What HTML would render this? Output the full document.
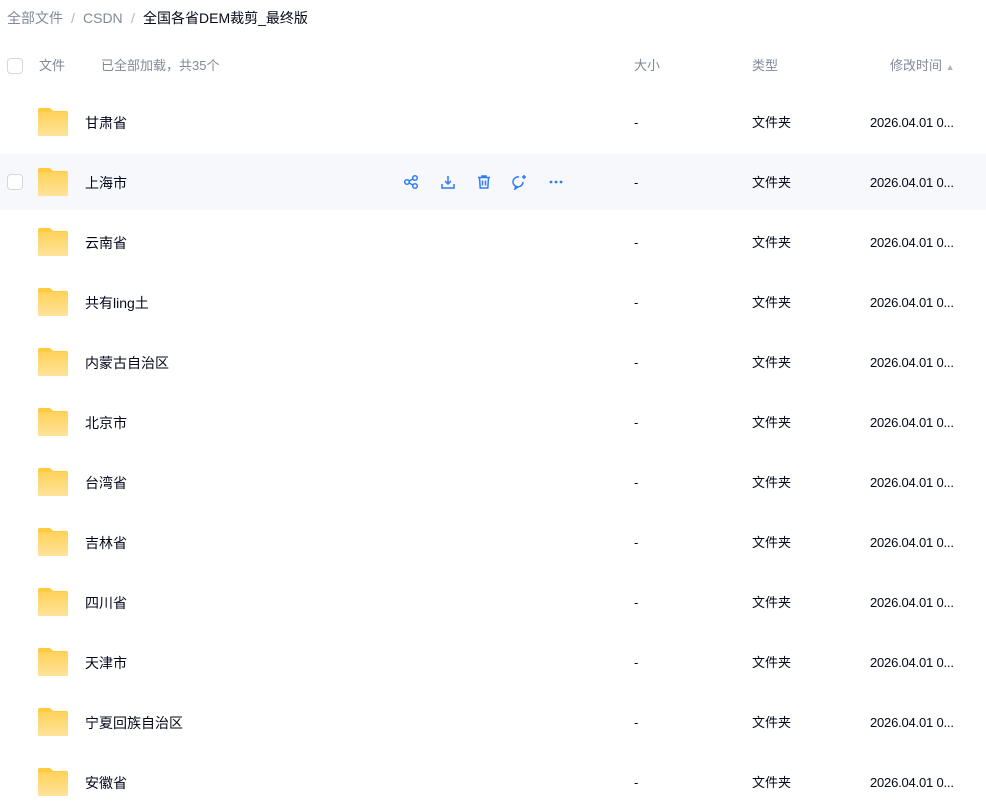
<!DOCTYPE html>
<html><head><meta charset="utf-8"><style>
*{margin:0;padding:0;box-sizing:border-box}
body{width:986px;height:801px;background:#fff;font-family:"Liberation Sans","Noto Sans CJK SC",sans-serif;position:relative;overflow:hidden;color:#03081a}
.a{position:absolute;white-space:nowrap}
.bc{top:8px;font-size:14px;line-height:20px;color:#818999}
.hd{top:56px;font-size:13px;line-height:20px;color:#818999}
.cb{position:absolute;left:7px;width:16px;height:16px;border:1px solid #d4d7de;border-radius:4px;background:#fff}
.row{position:absolute;left:0;width:986px;height:56px}
.row.h{background:#f7f8fc}
.fold{position:absolute;left:38px;width:30px;height:28px}
.c{position:absolute;top:1px;line-height:56px;white-space:nowrap}
.nm{left:85px;font-size:14px}
.sz{left:634px;font-size:13px}
.tp{left:752px;font-size:13px}
.tm{left:870px;font-size:13px;letter-spacing:-0.2px}
.ic{position:absolute;top:20px}
</style></head><body>
<div class="a bc" style="left:7px">全部文件</div>
<div class="a bc" style="left:71px;color:#b0b5c0">/</div>
<div class="a bc" style="left:83px">CSDN</div>
<div class="a bc" style="left:131px;color:#b0b5c0">/</div>
<div class="a bc" style="left:143px;color:#03081a">全国各省DEM裁剪_最终版</div>
<div class="cb" style="top:58px"></div>
<div class="a hd" style="left:39px">文件</div>
<div class="a hd" style="left:101px">已全部加载，共35个</div>
<div class="a hd" style="left:634px">大小</div>
<div class="a hd" style="left:752px">类型</div>
<div class="a hd" style="left:890px">修改时间 <span style="font-size:9px;color:#b0b5c0">▲</span></div>
<div id="rows"></div>
<script>
var n=["甘肃省","上海市","云南省","共有ling土","内蒙古自治区","北京市","台湾省","吉林省","四川省","天津市","宁夏回族自治区","安徽省"];
var h="";
var fold='<svg class="fold" style="top:14px" viewBox="0 0 30 28"><defs><linearGradient id="g" x1="0" y1="0" x2="0" y2="1"><stop offset="0" stop-color="#ffd25a"/><stop offset="1" stop-color="#ffe39c"/></linearGradient></defs><path d="M2 0h10l3 3h13a2 2 0 0 1 2 2v21a2 2 0 0 1-2 2H2a2 2 0 0 1-2-2V2a2 2 0 0 1 2-2z" fill="#ffc940"/><rect x="0" y="4" width="30" height="24" rx="2" fill="url(#g)"/></svg>';
for(var i=0;i<n.length;i++){
var t=94+i*60;
h+='<div class="row'+(i==1?' h':'')+'" style="top:'+t+'px">';
if(i==1){h+='<div class="cb" style="top:20px"></div>';
h+='<svg class="ic" style="left:403px" width="16" height="16" viewBox="0 0 16 16" fill="none" stroke="#2f7bf5" stroke-width="1.5"><circle cx="4" cy="8" r="2.3"/><circle cx="12" cy="4" r="2.3"/><circle cx="12" cy="12" r="2.3"/><path d="M6 7l4-2M6 9l4 2"/></svg>';
h+='<svg class="ic" style="left:440px" width="16" height="16" viewBox="0 0 16 16" fill="none" stroke="#2f7bf5" stroke-width="1.5"><path d="M8 2v8M5 7l3 3 3-3M2 10v4h12v-4"/></svg>';
h+='<svg class="ic" style="left:476px" width="16" height="16" viewBox="0 0 16 16" fill="none" stroke="#2f7bf5" stroke-width="1.5"><path d="M2 3.5h12M6 3.5V2h4v1.5M3.5 3.5l.7 10.5h7.6l.7-10.5M6.5 6.5v5M9.5 6.5v5"/></svg>';
h+='<svg class="ic" style="left:511px" width="17" height="16" viewBox="0 0 17 16" fill="none" stroke="#2f7bf5" stroke-width="1.5"><path d="M12 8a5 5 0 1 1-4-5M5 12l-1 3 3-2"/><path d="M13 1v4M11 3h4"/></svg>';
h+='<svg class="ic" style="left:548px" width="16" height="16" viewBox="0 0 16 16" fill="#2f7bf5"><circle cx="3" cy="8" r="1.4"/><circle cx="8" cy="8" r="1.4"/><circle cx="13" cy="8" r="1.4"/></svg>';}
h+=fold+'<div class="c nm">'+n[i]+'</div><div class="c sz">-</div><div class="c tp">文件夹</div><div class="c tm">2026.04.01 0...</div></div>';
}
document.getElementById("rows").innerHTML=h;
</script>
</body></html>
